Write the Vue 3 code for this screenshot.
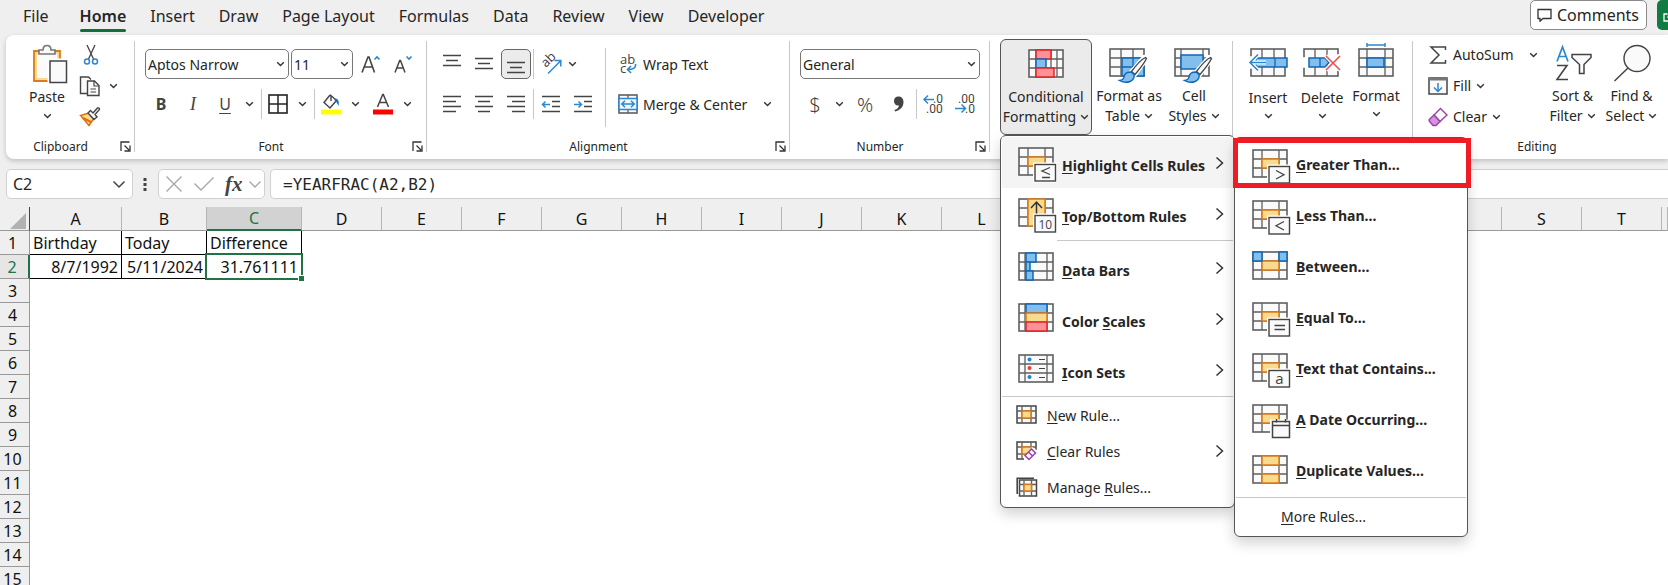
<script setup>
import { h } from 'vue'

const G = '#5f5f5f'
const line = (d, c = '#444', w = 1.3) => `<path d="${d}" fill="none" stroke="${c}" stroke-width="${w}"/>`
const box = (x, y, w, ht, f, s, sw = 1.5) => `<rect x="${x}" y="${y}" width="${w}" height="${ht}" fill="${f}" stroke="${s}" stroke-width="${sw}"/>`
const grid = (v1 = 10, v2 = 27) =>
  box(1, 1, 34, 27, '#fafafa', G, 1.6) + line(`M${v1} 1V28M${v2} 1V28M1 10H35M1 19H35`, G, 1.3)
const amber = (x, y, w, ht) => box(x, y, w, ht, '#f8db8f', '#dd7a1a')
const blue = (x, y, w, ht) => box(x, y, w, ht, '#83beec', '#0f67b5')
const red = (x, y, w, ht) => box(x, y, w, ht, '#ff9196', '#dc2626')
const badge = (glyph) =>
  box(16.5, 17, 21, 17, '#fff', '#fff', 3) + box(17, 17.5, 20.5, 16.5, '#fafafa', '#444', 1.4) + glyph
const badgeText = (t, size) =>
  `<text x="27.3" y="30.5" text-anchor="middle" font-family="Open Sans, sans-serif" font-weight="400" font-size="${size}" fill="#444">${t}</text>`
const brush =
  '<path d="M35 9L22 24L26 27L37 12Q38 8 35 9Z" fill="#fff" stroke="#fff" stroke-width="4"/>' +
  '<path d="M36.5 9.5Q31 12 22.5 23.5L26 26.5Q35 16 37.5 10.5Z" fill="#fafafa" stroke="#444" stroke-width="1.3"/>' +
  '<path d="M22 24Q15.5 24 15 29Q14.5 32 10.5 32.5Q16 35.5 21 33.5Q26 31 25 26.5Z" fill="#83beec" stroke="#0f67b5" stroke-width="1.4"/>'

const shapes = {
  paste: [36, 40, '<path d="M2 7H28V37H2Z" fill="#f8db8f" stroke="#dd7a1a" stroke-width="1.8"/><path d="M5 10H25V34H5Z" fill="#fafafa"/><path d="M7 10V6H11Q11 1.5 15 1.5T19 6H23V10Z" fill="#fafafa" stroke="#777" stroke-width="1.6"/><path d="M17.5 16.5H34.5V38.5H17.5Z" fill="#fafafa" stroke="#fff" stroke-width="4"/><path d="M18 17H34.5V38.5H18Z" fill="#fafafa" stroke="#444" stroke-width="1.5"/>'],
  cut: [16, 22, line('M4 1L10.5 15M12 1L5.5 15') + '<g fill="none" stroke="#2b88d0" stroke-width="1.5"><circle cx="4" cy="17.5" r="2.5"/><circle cx="12" cy="17.5" r="2.5"/></g>'],
  copy: [22, 22, '<path d="M8 18.5H1.5V2H9.5L12 4.5" fill="#fafafa" stroke="#444" stroke-width="1.4"/><path d="M8.5 6H15.5L20 10.5V20.5H8.5Z" fill="#fafafa" stroke="#444" stroke-width="1.4"/>' + line('M15 6V11H20M11.5 14H17M11.5 17H17', '#444', 1.2)],
  painter: [22, 22, '<path d="M1.500 9.500L10 7L14.500 13L10 19.500Z" fill="#f8db8f" stroke="#dd6f10" stroke-width="1.5"/><path d="M4 12L12 16" stroke="#dd6f10" stroke-width="2"/><path d="M9 7L11.500 4.500L14 7L18.500 2Q20.500 1.500 20.500 3.500L16 8.500L18 11L15 13.500Z" fill="#fafafa" stroke="#444" stroke-width="1.4"/>'],
  chev: [9, 6, line('M1.2 1.2L4.5 4.5L7.8 1.2', '#333', 1.4)],
  chevBig: [14, 9, line('M1.5 1.5L7 7L12.5 1.5', '#444', 1.5)],
  chevPale: [14, 9, line('M1.5 1.5L7 7L12.5 1.5', '#a8a8a8', 1.4)],
  right: [9, 14, line('M1.5 1.5L7.5 7L1.5 12.5', '#333', 1.5)],
  launch: [11, 11, line('M1 10V1H9.5M4.5 4.5L9 9M10 4.5V10H4.5', '#333', 1.3)],
  grow: [22, 22, line('M2 19.5L8 4H9L14.5 19.5M4.5 14H12.5', '#444', 1.6) + line('M14.5 6.5L17 4L19.5 6.5', '#2b88d0', 1.6)],
  shrink: [20, 22, line('M2 19.5L6.7 7.5H7.5L12 19.5M3.5 15H10.5', '#444', 1.5) + line('M13.5 3.5L16 6L18.5 3.5', '#2b88d0', 1.6)],
  border: [20, 20, box(1, 1, 18, 18, '#fff', '#222', 1.6) + line('M10 1V19M1 10H19', '#222', 1.5)],
  bucket: [22, 22, '<path d="M10 2L4 9.5L10 15L16.5 7.5L11 2.5V8" fill="#fafafa" stroke="#444" stroke-width="1.4"/><path d="M14 5.5Q20 4.5 18.5 13Q17 9 15 8" fill="#1a6fb5"/><path d="M1 16.5H21V21.5H1Z" fill="#ff0"/>'],
  color: [22, 22, line('M5.5 14L10.7 1.5H11.3L16.5 14M7.5 9.5H14.5', '#444', 1.5) + '<path d="M1 16.5H21V21.5H1Z" fill="#f00"/>'],
  top: [20, 20, line('M1 1.5H19M4 6.5H16M1 11.5H19')],
  middle: [20, 20, line('M1 4.5H19M4 9.5H16M1 14.5H19')],
  bottom: [20, 20, line('M1 8.5H19M4 13.5H16M1 18.5H19')],
  left: [20, 20, line('M1 2.5H19M1 7.5H14M1 12.5H19M1 17.5H14')],
  center: [20, 20, line('M1 2.5H19M4 7.5H16M1 12.5H19M4 17.5H16')],
  rightAlign: [20, 20, line('M1 2.5H19M6 7.5H19M1 12.5H19M6 17.5H19')],
  outdent: [20, 20, line('M1 2.5H19M11 7.5H19M11 12.5H19M1 17.5H19') + line('M9 10.5H2M4.5 7.5L1.5 10.5L4.5 13.5', '#2b88d0', 1.5)],
  indent: [20, 20, line('M1 2.5H19M11 7.5H19M11 12.5H19M1 17.5H19') + line('M1 10.5H8M5.5 7.5L8.5 10.5L5.5 13.5', '#2b88d0', 1.5)],
  orient: [22, 24, '<text transform="translate(6 16) rotate(-45)" font-family="Open Sans, sans-serif" font-size="13" fill="#444">ab</text>' + line('M8 21.5L20.5 9M14.5 8.5H20.8V14.5', '#2b88d0', 1.5)],
  wrap: [20, 24, '<g font-family="Open Sans, sans-serif" font-size="13" fill="#444"><text x="2" y="12">ab</text><text x="2" y="21">c</text></g>' + line('M17.5 12Q18.5 17.5 9.5 17.5M13 14L9.5 17.5L13 21', '#2b88d0', 1.6)],
  merge: [20, 20, box(1, 1, 18, 18, '#fafafa', G, 1.6) + line('M10 1V19', G) + box(1, 4.5, 18, 11, '#eef7fe', '#2b88d0') + line('M4 10H16M7 6.8L3.8 10L7 13.2M13 6.8L16.2 10L13 13.2', '#2b88d0', 1.5)],
  comma: [12, 18, '<path d="M5.5 1.5C9 1.5 10.5 4 10.5 7C10.5 12 7 15.5 2 16.5L1.5 15Q5.5 13.5 6 10.5C3 11 1 9 1 6Q1 1.5 5.5 1.5Z" fill="#444"/>'],
  decInc: [24, 24, '<g font-family="Roboto, sans-serif" font-size="12" fill="#444"><text x="11" y="11">.0</text><text x="4" y="21">.00</text></g>' + line('M12 7.5H2M6 3.5L2 7.5L6 11.5', '#2b88d0', 1.5)],
  decDec: [24, 24, '<g font-family="Roboto, sans-serif" font-size="12" fill="#444"><text x="4" y="11">.00</text><text x="11" y="21">.0</text></g>' + line('M1 16.5H11M7.5 12.5L11.5 16.5L7.5 20.5', '#2b88d0', 1.5)],
  conditional: [36, 36, grid(8, 29) + line('M23 1V28', G) + red(8, 1, 15, 9) + blue(8, 10, 10, 9) + red(8, 19, 18, 9)],
  asTable: [40, 36, grid(12, 24) + blue(13, 10, 22, 18) + line('M24 10V28M13 19H35', '#0f67b5') + brush],
  cellStyles: [40, 36, grid(7, 29) + box(7, 7, 22, 14, '#83beec', '#0f67b5') + brush],
  insert: [40, 36, box(3, 1, 34, 27, '#fafafa', G, 1.6) + line('M14 1V28M26 1V28', G) + box(1, 9, 5, 11, '#fff', '#fff') + blue(8, 10, 31, 9) + line('M27 10V19', '#0f67b5') + line('M18 14.5H2M10 6.5L2 14.5L10 22.5', '#fff', 4) + line('M18 14.5H2M10 6.5L2 14.5L10 22.5', '#2b88d0', 1.6)],
  remove: [40, 36, box(2, 1, 34, 27, '#fafafa', G, 1.6) + line('M13 1V28M25 1V28', G) + box(1, 10, 5, 9, '#fff', '#fff') + box(31, 7, 8, 15, '#fff', '#fff') + '<path d="M7 10H23L27 14.5L23 19H7Z" fill="#83beec" stroke="#0f67b5" stroke-width="1.5"/>' + line('M18 10V19', '#0f67b5') + line('M24 8L38 22M38 8L24 22', '#fff', 4) + line('M24 8L38 22M38 8L24 22', '#f05050', 1.6)],
  format: [36, 36, grid(9, 27) + blue(9, 10, 17, 9)],
  formatRule: [20, 6, line('M1 1V5M19 1V5M1 3H19', '#2b88d0', 1.5)],
  sum: [18, 20, line('M16.5 5V2H2L10 10L2 18H16.5V15', '#444', 1.5)],
  fill: [20, 20, box(1, 2, 18, 16, '#fafafa', '#444') + '<path d="M1 2H19V4.5H1Z" fill="#777"/>' + line('M10 7V15.5M6 11.5L10 15.5L14 11.5', '#2b88d0', 1.5)],
  clear: [20, 20, '<path d="M12.5 1.5L19 8L12 14.5L6 8Z" fill="#fafafa" stroke="#9b3fa8" stroke-width="1.4"/><path d="M6 8L12 14.5L8 18.5L5 18.5L1.2 14V12.5Z" fill="#d493dc" stroke="#9b3fa8" stroke-width="1.4"/>'],
  sort: [38, 38, line('M3 17.5L8.5 3L14 17.5M5 12.5H12', '#2b88d0', 1.7) + line('M3 21.5H13L3 35.5H14', '#444', 1.6) + '<path d="M18 10.5H37V13.5L30 20.5V29.5H25.5V20.5L18 13.5Z" fill="#fafafa" stroke="#444" stroke-width="1.5"/>'],
  find: [38, 38, '<circle cx="24" cy="14.5" r="13" fill="#fafafa" stroke="#444" stroke-width="1.4"/>' + line('M15 24L1.5 37', '#444', 1.5)],
  comment: [15, 14, line('M1 1.5H14V10.5H6L3 13.2V10.5H1Z', '#333', 1.3)],
  share: [14, 14, line('M4.5 6H1V13H13M5 10Q5.5 4.5 10 4.5M9 1.5L13 4.5', '#fff', 1.3)],
  dots: [4, 16, '<path d="M.5 2H3.5V5H.5ZM.5 7H3.5V10H.5ZM.5 12H3.5V15H.5Z" fill="#444"/>'],
  cancel: [18, 18, line('M1.5 1.5L16.5 16.5M16.5 1.5L1.5 16.5', '#a8a8a8', 1.4)],
  accept: [22, 16, line('M1.5 7.5L8 14L20.5 1.5', '#a8a8a8', 1.4)],
  corner: [16, 16, '<path d="M16 0V16H0Z" fill="#b2b2b2"/>'],
  le: [39, 36, grid() + amber(10, 10, 17, 9) + badge(line('M32 20.5L24 24L32 27.5M24 30.5H32'))],
  top10: [39, 36, grid() + amber(10, 1, 17, 27) + line('M18.5 27V4M13 10L18.5 4L24 10', '#333', 1.5) + badge(badgeText('10', 12))],
  bars: [39, 36, grid(7, 29) + blue(8, 1, 10, 9) + blue(8, 10, 4, 9) + blue(8, 19, 7, 9)],
  scales: [39, 36, grid(7, 29) + blue(8, 1, 21, 9) + amber(8, 10, 21, 9) + red(8, 19, 21, 9)],
  sets: [39, 36, grid(7, 29) + line('M21 5.5H27M21 14.5H27M21 23.5H27', '#444', 1.2) + '<circle cx="11.5" cy="5.5" r="2" fill="#1f83cf"/><circle cx="11.5" cy="14" r="2" fill="#ee3b3b"/><circle cx="11.5" cy="23" r="2" fill="#1f83cf"/>'],
  gt: [39, 36, grid() + amber(10, 10, 17, 9) + badge(line('M24 21.5L32 25.7L24 30'))],
  lt: [39, 36, grid() + amber(10, 10, 17, 9) + badge(line('M32 21.5L24 25.7L32 30'))],
  between: [39, 36, grid() + amber(10, 10, 17, 9) + blue(1, 1, 9, 9) + blue(27, 1, 8, 9)],
  eq: [39, 36, grid() + amber(10, 10, 17, 9) + badge(line('M22.5 23.5H33M22.5 27.5H33'))],
  contains: [39, 36, grid() + amber(10, 10, 17, 9) + badge(badgeText('a', 15))],
  date: [39, 36, grid() + amber(10, 10, 17, 9) + box(19.5, 17, 18.5, 17, '#fff', '#fff', 3) + box(20.5, 17.5, 17, 16, '#fafafa', '#444') + line('M20 21.5H38M24.5 15V18.5M33.5 15V18.5', '#444', 1.5)],
  duplicate: [39, 36, grid() + amber(10, 1, 17, 9) + amber(10, 19, 17, 9)],
  newRule: [22, 20, box(1, 1, 19, 17, '#fafafa', '#444') + line('M6 1V18M15 1V18M1 6H20M1 13H20', G) + amber(6, 6, 9, 7)],
  clearRules: [22, 20, box(1, 1, 19, 17, '#fafafa', '#444') + line('M6 1V18M15 1V18M1 6H20M1 13H20', G) + amber(6, 6, 9, 7) + '<path d="M16 6L22 10V20H8V15Z" fill="#fff"/><path d="M15.5 8L19.5 12L13 18.5L9 14.5ZM12.5 11L16.5 15" fill="#fafafa" stroke="#9b3fa8" stroke-width="1.5"/>'],
  manage: [22, 20, line('M1.2 17V1.2H18', '#444', 1.6) + box(3.5, 3, 17, 16, '#fafafa', '#444') + line('M8 3V19M15.5 3V19M3 7.5H20M3 14H20', G) + amber(8, 7.5, 7.5, 6.5)],
}

const Icon = ({ name }) => {
  const [w, ht, body] = shapes[name]
  return h('svg', { width: w, height: ht, viewBox: `0 0 ${w} ${ht}`, 'aria-hidden': 'true', innerHTML: body })
}
Icon.props = ['name']

const tabs = ['File', 'Home', 'Insert', 'Draw', 'Page Layout', 'Formulas', 'Data', 'Review', 'View', 'Developer']

const ruleMenu = [
  { icon: 'le', text: ['', 'H', 'ighlight Cells Rules'], on: true },
  { icon: 'top10', text: ['', 'T', 'op/Bottom Rules'], rule: true },
  { icon: 'bars', text: ['', 'D', 'ata Bars'] },
  { icon: 'scales', text: ['Color ', 'S', 'cales'] },
  { icon: 'sets', text: ['', 'I', 'con Sets'] },
]
const ruleActions = [
  { icon: 'newRule', text: ['', 'N', 'ew Rule...'] },
  { icon: 'clearRules', text: ['', 'C', 'lear Rules'], more: true },
  { icon: 'manage', text: ['Manage ', 'R', 'ules...'] },
]
const highlightMenu = [
  { icon: 'gt', text: ['', 'G', 'reater Than...'], marked: true },
  { icon: 'lt', text: ['', 'L', 'ess Than...'] },
  { icon: 'between', text: ['', 'B', 'etween...'] },
  { icon: 'eq', text: ['', 'E', 'qual To...'] },
  { icon: 'contains', text: ['', 'T', 'ext that Contains...'] },
  { icon: 'date', text: ['', 'A', ' Date Occurring...'] },
  { icon: 'duplicate', text: ['', 'D', 'uplicate Values...'] },
]

const columns = 'ABCDEFGHIJKLMNOPQRSTU'.split('')
const cells = { A1: 'Birthday', B1: 'Today', C1: 'Difference', A2: '8/7/1992', B2: '5/11/2024', C2: '31.761111' }
</script>

<template>
  <div class="app">
    <header class="tabbar">
      <nav class="tabs" aria-label="Ribbon tabs">
        <button v-for="t in tabs" :key="t" class="tab" :class="{ active: t === 'Home' }">{{ t }}</button>
      </nav>
      <button class="comments"><Icon name="comment" />Comments</button>
      <button class="share" aria-label="Share"><Icon name="share" /></button>
    </header>

    <section class="ribbon" aria-label="Home">
      <div class="group clipboard">
        <div class="body">
          <button class="big paste"><Icon name="paste" /><span>Paste</span><Icon name="chev" /></button>
          <div class="stack">
            <button class="cut" aria-label="Cut"><Icon name="cut" /></button>
            <button aria-label="Copy"><Icon name="copy" /><Icon name="chev" /></button>
            <button aria-label="Format Painter"><Icon name="painter" /></button>
          </div>
        </div>
        <footer><span>Clipboard</span><button aria-label="Clipboard options"><Icon name="launch" /></button></footer>
      </div>

      <div class="group font">
        <div class="body rows">
          <div class="row">
            <label class="combo wide"><select aria-label="Font"><option>Aptos Narrow</option></select><Icon name="chev" /></label>
            <label class="combo size"><select aria-label="Font size"><option>11</option></select><Icon name="chev" /></label>
            <button class="tool" aria-label="Increase font size"><Icon name="grow" /></button>
            <button class="tool" aria-label="Decrease font size"><Icon name="shrink" /></button>
          </div>
          <div class="row">
            <button class="tool glyph bold">B</button>
            <button class="tool glyph ital">I</button>
            <button class="tool glyph under">U</button>
            <button class="drop" aria-label="Underline styles"><Icon name="chev" /></button>
            <i class="bar"></i>
            <button class="tool" aria-label="Borders"><Icon name="border" /></button>
            <button class="drop" aria-label="Border styles"><Icon name="chev" /></button>
            <i class="bar"></i>
            <button class="tool" aria-label="Fill color"><Icon name="bucket" /></button>
            <button class="drop" aria-label="Fill colors"><Icon name="chev" /></button>
            <button class="tool fontcolor" aria-label="Font color"><Icon name="color" /></button>
            <button class="drop" aria-label="Font colors"><Icon name="chev" /></button>
          </div>
        </div>
        <footer><span>Font</span><button aria-label="Font options"><Icon name="launch" /></button></footer>
      </div>

      <div class="group alignment">
        <div class="body">
          <div class="rows aligns">
            <div class="row">
              <button class="tool" aria-label="Top align"><Icon name="top" /></button>
              <button class="tool" aria-label="Middle align"><Icon name="middle" /></button>
              <button class="tool pressed" aria-label="Bottom align"><Icon name="bottom" /></button>
              <i class="bar thin"></i>
              <button class="tool" aria-label="Orientation"><Icon name="orient" /></button>
              <button class="drop near" aria-label="Orientations"><Icon name="chev" /></button>
            </div>
            <div class="row">
              <button class="tool" aria-label="Align left"><Icon name="left" /></button>
              <button class="tool" aria-label="Center"><Icon name="center" /></button>
              <button class="tool" aria-label="Align right"><Icon name="rightAlign" /></button>
              <i class="bar thin"></i>
              <button class="tool" aria-label="Decrease indent"><Icon name="outdent" /></button>
              <button class="tool" aria-label="Increase indent"><Icon name="indent" /></button>
            </div>
          </div>
          <div class="rows wraps">
            <div class="row"><button class="texted"><Icon name="wrap" /><span>Wrap Text</span></button></div>
            <div class="row">
              <button class="texted"><Icon name="merge" /><span>Merge &amp; Center</span></button>
              <button class="drop" aria-label="Merge options"><Icon name="chev" /></button>
            </div>
          </div>
        </div>
        <footer><span>Alignment</span><button aria-label="Alignment options"><Icon name="launch" /></button></footer>
      </div>

      <div class="group number">
        <div class="body rows">
          <div class="row"><label class="combo full"><select aria-label="Number format"><option>General</option></select><Icon name="chev" /></label></div>
          <div class="row">
            <button class="tool glyph sign dollar">$</button>
            <button class="drop" aria-label="Currencies"><Icon name="chev" /></button>
            <button class="tool glyph sign percent">%</button>
            <button class="tool" aria-label="Comma style"><Icon name="comma" /></button>
            <i class="bar thin"></i>
            <button class="tool" aria-label="Increase decimal"><Icon name="decInc" /></button>
            <button class="tool" aria-label="Decrease decimal"><Icon name="decDec" /></button>
          </div>
        </div>
        <footer><span>Number</span><button aria-label="Number options"><Icon name="launch" /></button></footer>
      </div>

      <div class="group styles">
        <div class="anchor">
          <button class="big two cond"><Icon name="conditional" /><span>Conditional</span><span>Formatting <Icon name="chev" /></span></button>
          <div class="menu">
            <template v-for="m in ruleMenu" :key="m.icon">
              <button class="item" :class="{ on: m.on }">
                <Icon :name="m.icon" /><span class="label low">{{ m.text[0] }}<u>{{ m.text[1] }}</u>{{ m.text[2] }}</span><Icon name="right" />
              </button>
              <hr v-if="m.rule" class="inset" />
            </template>
            <hr />
            <button v-for="m in ruleActions" :key="m.icon" class="item small">
              <Icon :name="m.icon" /><span class="label">{{ m.text[0] }}<u>{{ m.text[1] }}</u>{{ m.text[2] }}</span><Icon v-if="m.more" name="right" />
            </button>
            <div class="menu sub">
              <button v-for="m in highlightMenu" :key="m.icon" class="item" :class="{ marked: m.marked }">
                <Icon :name="m.icon" /><span class="label">{{ m.text[0] }}<u>{{ m.text[1] }}</u>{{ m.text[2] }}</span>
              </button>
              <hr />
              <button class="item small last"><span class="label"><u>M</u>ore Rules...</span></button>
            </div>
          </div>
        </div>
        <button class="big two table"><Icon name="asTable" /><span>Format as</span><span>Table <Icon name="chev" /></span></button>
        <button class="big two cell"><Icon name="cellStyles" /><span>Cell</span><span>Styles <Icon name="chev" /></span></button>
      </div>

      <div class="group cellsgroup">
        <button class="big two one"><Icon name="insert" /><span>Insert</span><Icon name="chev" /></button>
        <button class="big two one"><Icon name="remove" /><span>Delete</span><Icon name="chev" /></button>
        <button class="big two format"><Icon name="format" /><Icon name="formatRule" class="over" /><span>Format</span><Icon name="chev" /></button>
      </div>

      <div class="group editing">
        <div class="body">
          <div class="stack labelled">
            <button class="auto"><Icon name="sum" /><span>AutoSum</span><Icon name="chev" /></button>
            <button><Icon name="fill" /><span>Fill</span><Icon name="chev" /></button>
            <button><Icon name="clear" /><span>Clear</span><Icon name="chev" /></button>
          </div>
          <button class="big tall"><Icon name="sort" /><span>Sort &amp;</span><span>Filter <Icon name="chev" /></span></button>
          <button class="big tall"><Icon name="find" /><span>Find &amp;</span><span>Select <Icon name="chev" /></span></button>
        </div>
        <footer><span>Editing</span></footer>
      </div>
    </section>

    <div class="formulabar">
      <label class="namebox"><input aria-label="Name box" value="C2" /><Icon name="chevBig" /></label>
      <Icon name="dots" />
      <div class="fx">
        <button aria-label="Cancel"><Icon name="cancel" /></button>
        <button aria-label="Enter"><Icon name="accept" /></button>
        <button class="fn">fx</button>
        <button aria-label="Functions"><Icon name="chevPale" /></button>
      </div>
      <input class="formula" aria-label="Formula" value="=YEARFRAC(A2,B2)" />
    </div>

    <table class="sheet">
      <colgroup>
        <col class="c-head" /><col class="c-a" /><col class="c-b" /><col class="c-c" />
        <col v-for="c in columns.slice(3, -1)" :key="c" class="c-n" /><col />
      </colgroup>
      <thead>
        <tr>
          <th class="all" aria-label="Select all"><Icon name="corner" /></th>
          <th v-for="c in columns" :key="c" :class="{ sel: c === 'C' }">{{ c === 'U' ? '' : c }}</th>
        </tr>
      </thead>
      <tbody>
        <tr v-for="r in 15" :key="r">
          <th :class="{ sel: r === 2 }">{{ r }}</th>
          <td v-for="c in columns" :key="c" :class="{ data: cells[c + r], num: r === 2, picked: c + r === 'C2' }">{{ cells[c + r] }}</td>
        </tr>
      </tbody>
    </table>
  </div>
</template>

<style>
html, body { overflow: hidden; background: #fff; }
</style>

<style scoped>
.app { font-family: "Noto Sans", "Open Sans", sans-serif; font-size: 14px; color: #262626; min-height: 100vh; background: #efefef; }
button { font: inherit; color: inherit; background: none; border: 0; padding: 0; margin: 0; display: flex; align-items: center; justify-content: center; white-space: nowrap; }
svg { display: block; flex: none; }
input, select { font: inherit; color: inherit; border: 0; background: none; outline: 0; padding: 0; margin: 0; min-width: 0; appearance: none; }

.tabbar { display: flex; height: 35px; align-items: flex-start; }
.tabs { display: flex; flex: 1; padding-left: 11px; }
.tab { position: relative; height: 32px; padding: 0 12px; font-size: 16px; }
.tab.active { font-weight: 600; margin-left: 7px; }
.tab.active::after { content: ""; position: absolute; left: 12px; right: 12px; bottom: 0; height: 3px; border-radius: 2px; background: #0f703b; }
.comments { height: 30px; padding: 0 7px 0 6px; gap: 5px; font-size: 16px; background: #fff; border: 1px solid #8a8a8a; border-radius: 5px; margin-right: 10px; }
.share { width: 11px; height: 30px; padding-left: 6px; justify-content: flex-start; overflow: hidden; background: #107c41; border-radius: 5px 0 0 5px; }

.ribbon { display: flex; height: 124px; margin-left: 6px; background: #fff; border-radius: 8px 0 0 8px; box-shadow: 0 2px 5px rgba(0, 0, 0, .2); }
.group { position: relative; display: flex; flex-direction: column; flex: none; padding: 4px 0; box-sizing: border-box; }
.group:not(.editing)::after { content: ""; position: absolute; right: 0; top: 6px; bottom: 7px; width: 1px; background: #c8c8c8; }
.body { display: flex; flex: 1; }
footer { display: flex; height: 18px; align-items: center; font-size: 12px; }
footer span { flex: 1; text-align: center; }
footer button { width: 20px; height: 16px; }
.clipboard { width: 129px; }
.font { width: 292px; }
.alignment { width: 363px; }
.number { width: 200px; }
.styles { width: 243px; flex-direction: row; }
.cellsgroup { width: 180px; flex-direction: row; padding-left: 8px; }
.editing { flex: 1 1 0; }
.editing footer { padding-right: 7px; }

.big { flex-direction: column; justify-content: flex-start; line-height: 20px; }
.big span { display: flex; align-items: center; gap: 4px; }
.paste { margin-left: 18px; width: 46px; padding-top: 5px; height: 98px; }
.paste > svg:first-child { margin-left: 6px; }
.paste span { margin: 3px 0 6px; }
.stack { display: flex; flex-direction: column; margin-left: 9px; }
.stack button { height: 31px; gap: 8px; justify-content: flex-start; }
.stack .cut { padding-left: 4px; }

.rows { display: flex; flex-direction: column; gap: 10px; padding: 10px 0 0 9px; }
.row { display: flex; align-items: center; height: 30px; }
.combo { position: relative; display: flex; align-items: center; height: 30px; box-sizing: border-box; border: 1px solid #777; border-radius: 5px; background: #fff; padding: 0 3px 0 2px; }
.combo select { flex: 1; height: 26px; }
.font .rows { padding-left: 10px; }
.wide { width: 144px; margin-right: 2px; }
.size { width: 62px; margin-right: 2px; }
.full { width: 180px; margin-left: 1px; }
.tool { width: 32px; height: 30px; box-sizing: border-box; }
.drop { width: 16px; height: 30px; }
.bar { width: 1px; height: 30px; background: #c8c8c8; margin: 0 0 0 4px; }
.bar.thin { margin: 0 1px; }
.fontcolor { margin-left: 4px; }
.near { margin-left: -3px; }
.glyph { font-size: 16px; color: #444; }
.bold { font-weight: 700; }
.ital { font-family: "Liberation Serif", serif; font-style: italic; font-size: 18px; }
.under { text-decoration: underline; text-underline-offset: 3px; }
.sign { font-size: 20px; font-weight: 300; }
.percent { width: 36px; }
.pressed { border: 1px solid #666; border-radius: 5px; background: #ebebeb; width: 30px; margin: 0 1px; }
.alignment .body { padding-bottom: 10px; }
.aligns { width: 170px; position: relative; }
.aligns::after { content: ""; position: absolute; right: 0; top: 9px; bottom: 0; width: 1px; background: #c8c8c8; }
.wraps { padding-left: 12px; }
.texted { gap: 5px; margin-right: 12px; }
.texted svg { width: 20px; }

.anchor { position: relative; z-index: 5; margin-left: 10px; }
.two { padding-top: 9px; height: 96px; box-sizing: border-box; }
.two > svg:first-child { margin-bottom: 2px; }
.two > svg:last-child { margin-top: 5px; }
.one > svg:first-child { margin-bottom: 4px; }
.cond { width: 92px; border: 1px solid #555; border-radius: 6px; background: #ebebeb; }
.table { width: 74px; }
.cell { width: 56px; }
.cellsgroup .big { width: 54px; }
.format { position: relative; }
.over { position: absolute; top: 3px; left: 17px; }
.tall { width: 59px; height: 98px; padding-top: 5px; }
.tall > svg:first-child { margin-bottom: 4px; }
.labelled { margin-left: 15px; width: 115px; }
.labelled button { gap: 5px; }
.labelled svg:first-child { width: 20px; }
.auto span { flex: 1; text-align: left; }
.auto { padding-right: 5px; }

.menu { position: absolute; top: 96px; left: 0; width: 235px; box-sizing: border-box; padding: 1px 1px 2px; background: #fff; border: 1px solid #555; border-radius: 6px; box-shadow: 0 6px 14px rgba(0, 0, 0, .18); }
.menu hr { border: 0; height: 1px; margin: 1px 0 0; background: #c8c8c8; }
.menu .inset { margin: 1px 0 1px 55px; }
.item { position: relative; width: 100%; height: 51px; justify-content: flex-start; padding: 0 9px 0 16px; font-weight: 700; }
.on { background: #f4f4f4; }
.item > svg:first-child { margin: 5px 5px 0 0; }
.label { flex: 1; text-align: left; }
.low { padding-top: 6px; }
.label u { text-underline-offset: 2px; }
.item.small { height: 36px; font-weight: 400; padding-left: 14px; }
.item.small > svg:first-child { margin: 0 9px 0 0; }
.menu.sub { top: 1px; left: 233px; width: 234px; }
.item.last { padding-left: 45px; }
.marked::after { content: ""; position: absolute; left: -3px; right: -5px; top: -1px; height: 40px; border: 5px solid #ee1c25; }

.formulabar { display: flex; align-items: center; height: 48px; padding: 2px 0 0 6px; box-sizing: border-box; }
.namebox, .fx, .formula { box-sizing: border-box; height: 30px; background: #fff; border: 1px solid #d0d0d0; border-radius: 5px; }
.namebox { display: flex; align-items: center; width: 127px; padding: 0 6px; margin-right: 10px; font-size: 16px; }
.namebox input { flex: 1; }
.fx { display: flex; align-items: center; width: 107px; margin: 0 5px 0 11px; padding-left: 6px; gap: 10px; }
.fx button:last-child { margin-left: -5px; }
.fn { font-family: "Liberation Serif", serif; font-style: italic; font-weight: 700; font-size: 21px; color: #444; }
.formula { flex: 1; border-right: 0; border-radius: 5px 0 0 5px; padding-left: 12px; font-family: "DejaVu Sans Mono", monospace; font-size: 16px; }

.sheet { width: 100%; table-layout: fixed; border-collapse: separate; border-spacing: 0; background: #fff; font-size: 16px; color: #111; }
.c-head { width: 30px; }
.c-a { width: 92px; }
.c-b { width: 85px; }
.c-c { width: 95px; }
.c-n { width: 80px; }
th, td { box-sizing: border-box; height: 24px; padding: 0; line-height: 22px; font-weight: 400; white-space: nowrap; }
th { background: #efefef; border-right: 1px solid #999; border-bottom: 1px solid #999; }
thead th { border-right-color: #b5b5b5; }
tbody th { padding-right: 4px; }
.all svg { margin: 4px 0 0 10px; }
thead .all { border-right-color: #444; }
thead .sel { background: #d2d2d2; color: #217346; border-bottom: 2px solid #217346; line-height: 21px; }
tbody .sel { background: #e6e6e6; color: #217346; border-right: 2px solid #217346; }
td.data { border-right: 1px solid #000; border-bottom: 1px solid #000; padding: 0 3px; }
td.num { text-align: right; }
td.picked { position: relative; }
.picked::before { content: ""; position: absolute; left: -2px; right: -2px; top: -2px; bottom: -2px; border: 2px solid #217346; }
.picked::after { content: ""; position: absolute; right: -4px; bottom: -4px; width: 5px; height: 5px; background: #217346; border: 1px solid #fff; }
</style>
